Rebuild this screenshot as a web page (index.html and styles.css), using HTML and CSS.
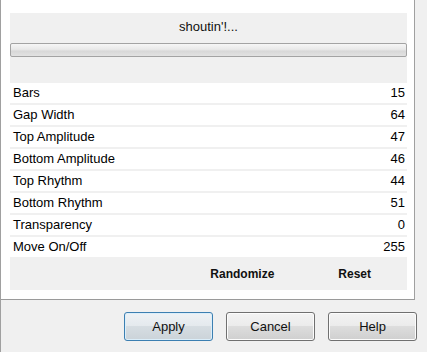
FILE: index.html
```html
<!DOCTYPE html>
<html>
<head>
<meta charset="utf-8">
<link rel="stylesheet" href="styles.css">
</head>
<body>
<div class="window">
  <div class="panel">
    <div class="header">
      <div class="title">shoutin'!...</div>
      <div class="progress"></div>
    </div>
    <div class="rows">
      <div class="row"><span>Bars</span><span>15</span></div>
      <div class="row"><span>Gap Width</span><span>64</span></div>
      <div class="row"><span>Top Amplitude</span><span>47</span></div>
      <div class="row"><span>Bottom Amplitude</span><span>46</span></div>
      <div class="row"><span>Top Rhythm</span><span>44</span></div>
      <div class="row"><span>Bottom Rhythm</span><span>51</span></div>
      <div class="row"><span>Transparency</span><span>0</span></div>
      <div class="row"><span>Move On/Off</span><span>255</span></div>
    </div>
    <div class="actions">
      <span class="action">Randomize</span>
      <span class="action">Reset</span>
    </div>
  </div>
  <div class="footer">
    <button class="btn default">Apply</button>
    <button class="btn">Cancel</button>
    <button class="btn">Help</button>
  </div>
</div>
</body>
</html>
```
FILE: styles.css
```css
html, body {
  margin: 0;
  padding: 0;
}
body {
  width: 427px;
  height: 352px;
  overflow: hidden;
  background: #f0f0f0;
  font-family: "Liberation Sans", Arial, sans-serif;
  font-size: 13px;
  color: #000;
}
.window {
  height: 352px;
  border-left: 1px solid #a0a0a0;
  box-sizing: border-box;
}
.panel {
  width: 414px;
  background: #fff;
  border-right: 1px solid #a0a0a0;
  border-bottom: 1px solid #9a9a9a;
  padding: 13px 7px 0 9px;
  box-sizing: border-box;
  height: 300px;
}
.header {
  background: #f0f0f0;
  height: 70px;
  padding-top: 6px;
  box-sizing: border-box;
}
.title {
  text-align: center;
  line-height: 15px;
  height: 15px;
  color: #111;
}
.progress {
  margin-top: 9px;
  height: 14px;
  box-sizing: border-box;
  border: 1px solid #a3a3a3;
  border-radius: 2px;
  background: linear-gradient(#f6f6f6 0%, #e8e8e8 45%, #d8d8d8 60%, #e2e2e2 100%);
}
.rows {
  background: #f0f0f0;
}
.row {
  display: flex;
  justify-content: space-between;
  align-items: center;
  height: 20px;
  margin-bottom: 2px;
  background: #fff;
  padding: 0 2px 0 3px;
  line-height: 20px;
}
.actions {
  background: #f0f0f0;
  height: 33px;
  margin-top: -2px;
  display: flex;
  justify-content: flex-end;
  align-items: center;
  gap: 64px;
  padding-right: 36px;
  font-weight: bold;
  font-size: 12px;
  color: #111;
}
.footer {
  display: flex;
  justify-content: flex-end;
  gap: 13px;
  padding: 12px 10px 0 0;
}
.btn {
  width: 89px;
  height: 29px;
  margin: 0;
  font-family: "Liberation Sans", Arial, sans-serif;
  font-size: 13px;
  color: #111;
  border: 1px solid #707070;
  border-radius: 3px;
  box-shadow: inset 0 0 0 1px #fcfcfc;
  background: linear-gradient(#f3f3f3 0%, #ebebeb 49%, #dddddd 50%, #cfcfcf 100%);
  padding: 0;
}
.btn.default {
  border-color: #3c7fb1;
  box-shadow: inset 0 0 0 1px #dbeefa;
  background: linear-gradient(#eef2f5 0%, #e4e9ed 49%, #d6dde2 50%, #cbd3d9 100%);
}
```
